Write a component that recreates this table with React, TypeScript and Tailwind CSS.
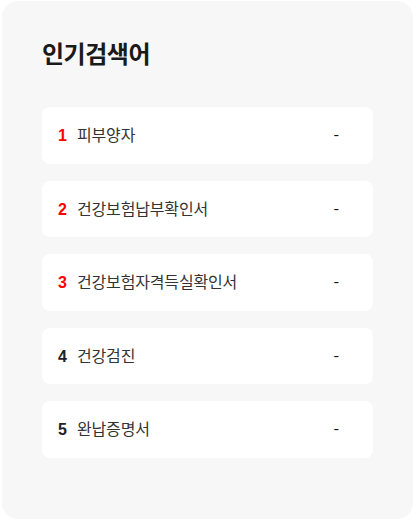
const keywords = [
  "피부양자",
  "건강보험납부확인서",
  "건강보험자격득실확인서",
  "건강검진",
  "완납증명서",
];

export default function App() {
  return (
    <div className="bg-white w-[417px] h-[521px] pt-px pl-[2px] font-['Noto_Sans_CJK_KR',sans-serif]">
      <div className="w-[411px] h-[518px] bg-[#f7f7f7] rounded-2xl px-10 pt-[38px]">
        <h2 className="text-[24px] leading-[28px] font-bold tracking-[-0.02em] text-[#1a1a1a]">
          인기검색어
        </h2>
        <ul className="mt-[40px] flex flex-col gap-[17px]">
          {keywords.map((word, i) => (
            <li
              key={word}
              className="h-[56.5px] bg-white rounded-lg flex items-center pl-4 pr-[34px]"
            >
              <div className="flex-1 flex items-baseline leading-6">
                <span
                  className={`w-[19px] text-[16px] font-bold font-['Liberation_Sans',sans-serif] ${
                    i < 3 ? "text-[#ff0000]" : "text-[#222]"
                  }`}
                >
                  {i + 1}
                </span>
                <span className="text-[16px] tracking-[-0.01em] text-[#333]">
                  {word}
                </span>
              </div>
              <span className="text-[16px] leading-6 pb-1 text-[#111]">-</span>
            </li>
          ))}
        </ul>
      </div>
    </div>
  );
}
